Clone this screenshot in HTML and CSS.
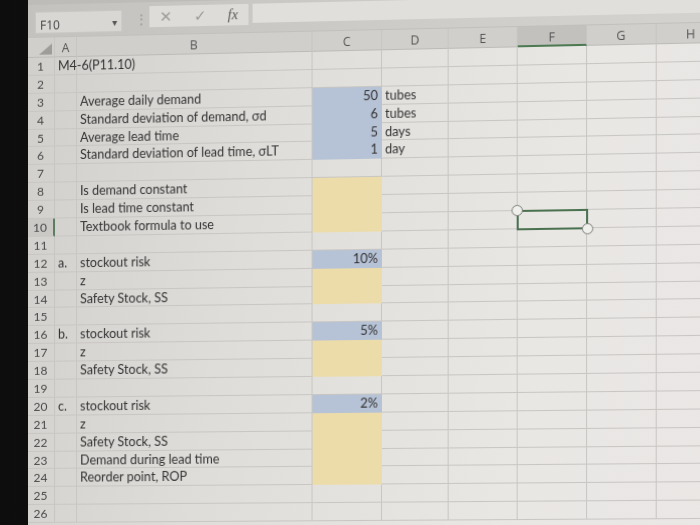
FILE: index.html
```html
<!DOCTYPE html>
<html lang="en">
<head>
    <meta charset="UTF-8">
    <meta name="viewport" content="width=device-width, initial-scale=1.0">
    <title>M4-6 Safety Stock</title>
    <link rel="stylesheet" href="styles.css">
</head>
<body>
    <div class="screen">

        <!-- Formula bar -->
        <div class="ribbon-edge"></div>
        <div class="formula-bar">
            <div class="name-box">F10 <span class="caret">&#9662;</span></div>
            <div class="grip">&#8942;</div>
            <div class="fx-buttons">
                <span class="fx-cancel">&#10005;</span>
                <span class="fx-ok">&#10003;</span>
                <span class="fx-label"><i>fx</i></span>
            </div>
            <div class="fx-input"></div>
        </div>

        <!-- Sheet -->
        <div class="sheet">
            <div class="row head">
                <div class="corner"></div><div>A</div><div>B</div><div>C</div><div>D</div><div>E</div><div class="active">F</div><div>G</div><div>H</div><div></div>
            </div>
            <div class="row">
                <div class="rn">1</div><div class="spill">M4-6(P11.10)</div><div></div><div></div><div></div><div></div><div></div><div></div><div></div><div></div>
            </div>
            <div class="row">
                <div class="rn">2</div><div></div><div></div><div></div><div></div><div></div><div></div><div></div><div></div><div></div>
            </div>
            <div class="row">
                <div class="rn">3</div><div></div><div>Average daily demand</div><div class="blue num">50</div><div>tubes</div><div></div><div></div><div></div><div></div><div></div>
            </div>
            <div class="row">
                <div class="rn">4</div><div></div><div>Standard deviation of demand, σd</div><div class="blue num">6</div><div>tubes</div><div></div><div></div><div></div><div></div><div></div>
            </div>
            <div class="row">
                <div class="rn">5</div><div></div><div>Average lead time</div><div class="blue num">5</div><div>days</div><div></div><div></div><div></div><div></div><div></div>
            </div>
            <div class="row">
                <div class="rn">6</div><div></div><div>Standard deviation of lead time, σLT</div><div class="blue num">1</div><div>day</div><div></div><div></div><div></div><div></div><div></div>
            </div>
            <div class="row">
                <div class="rn">7</div><div></div><div></div><div></div><div></div><div></div><div></div><div></div><div></div><div></div>
            </div>
            <div class="row">
                <div class="rn">8</div><div></div><div>Is demand constant</div><div class="yellow"></div><div></div><div></div><div></div><div></div><div></div><div></div>
            </div>
            <div class="row">
                <div class="rn">9</div><div></div><div>Is lead time constant</div><div class="yellow"></div><div></div><div></div><div></div><div></div><div></div><div></div>
            </div>
            <div class="row">
                <div class="rn active">10</div><div></div><div>Textbook formula to use</div><div class="yellow"></div><div></div><div></div><div class="selected"><span class="handle tl"></span><span class="handle br"></span></div><div></div><div></div><div></div>
            </div>
            <div class="row">
                <div class="rn">11</div><div></div><div></div><div></div><div></div><div></div><div></div><div></div><div></div><div></div>
            </div>
            <div class="row">
                <div class="rn">12</div><div>a.</div><div>stockout risk</div><div class="blue num">10%</div><div></div><div></div><div></div><div></div><div></div><div></div>
            </div>
            <div class="row">
                <div class="rn">13</div><div></div><div>z</div><div class="yellow"></div><div></div><div></div><div></div><div></div><div></div><div></div>
            </div>
            <div class="row">
                <div class="rn">14</div><div></div><div>Safety Stock, SS</div><div class="yellow"></div><div></div><div></div><div></div><div></div><div></div><div></div>
            </div>
            <div class="row">
                <div class="rn">15</div><div></div><div></div><div></div><div></div><div></div><div></div><div></div><div></div><div></div>
            </div>
            <div class="row">
                <div class="rn">16</div><div>b.</div><div>stockout risk</div><div class="blue num">5%</div><div></div><div></div><div></div><div></div><div></div><div></div>
            </div>
            <div class="row">
                <div class="rn">17</div><div></div><div>z</div><div class="yellow"></div><div></div><div></div><div></div><div></div><div></div><div></div>
            </div>
            <div class="row">
                <div class="rn">18</div><div></div><div>Safety Stock, SS</div><div class="yellow"></div><div></div><div></div><div></div><div></div><div></div><div></div>
            </div>
            <div class="row">
                <div class="rn">19</div><div></div><div></div><div></div><div></div><div></div><div></div><div></div><div></div><div></div>
            </div>
            <div class="row">
                <div class="rn">20</div><div>c.</div><div>stockout risk</div><div class="blue num">2%</div><div></div><div></div><div></div><div></div><div></div><div></div>
            </div>
            <div class="row">
                <div class="rn">21</div><div></div><div>z</div><div class="yellow"></div><div></div><div></div><div></div><div></div><div></div><div></div>
            </div>
            <div class="row">
                <div class="rn">22</div><div></div><div>Safety Stock, SS</div><div class="yellow"></div><div></div><div></div><div></div><div></div><div></div><div></div>
            </div>
            <div class="row">
                <div class="rn">23</div><div></div><div>Demand during lead time</div><div class="yellow"></div><div></div><div></div><div></div><div></div><div></div><div></div>
            </div>
            <div class="row">
                <div class="rn">24</div><div></div><div>Reorder point, ROP</div><div class="yellow"></div><div></div><div></div><div></div><div></div><div></div><div></div>
            </div>
            <div class="row">
                <div class="rn">25</div><div></div><div></div><div></div><div></div><div></div><div></div><div></div><div></div><div></div>
            </div>
            <div class="row">
                <div class="rn">26</div><div></div><div></div><div></div><div></div><div></div><div></div><div></div><div></div><div></div>
            </div>
        </div>
    </div>
</body>
</html>
```

FILE: styles.css
```css
* {
    box-sizing: border-box;
}

body {
    margin: 0;
    padding-left: 28px;
    height: 525px;
    overflow: hidden;
    background: linear-gradient(to right, #0d0d0d, #1b1b1b);
    font-family: 'Lato', 'Liberation Sans', sans-serif;
}

/* the photo is taken at a slight angle: right side is closer */
.screen {
    width: 760px;
    height: 540px;
    background: linear-gradient(100deg, #d1cfcc 0%, #dfddda 30%, #e9e7e4 65%, #eae7e6 100%);
    transform: perspective(1000px) rotateY(-1.94deg);
    transform-origin: 0 700px;
}

.ribbon-edge {
    height: 5px;
    background: #bebcb9;
}

.formula-bar {
    height: 33px;
    display: flex;
    align-items: flex-start;
    background: linear-gradient(to right, #c4c2bf, #d0cecb 60%, #d6d4d1);
    border-bottom: 1px solid #c2c0bd;
}

.name-box {
    margin: 7px 0 0 7px;
    width: 87px;
    height: 22px;
    background: #d9d7d4;
    border: 1px solid #cac8c5;
    font-family: 'Open Sans', sans-serif;
    font-size: 12px;
    color: #444;
    padding: 4px 0 0 4px;
    display: flex;
    justify-content: space-between;
}

.name-box .caret {
    font-size: 10px;
    color: #555;
    padding-right: 4px;
}

.grip {
    margin: 8px 0 0 12px;
    width: 10px;
    color: #9a9895;
    font-size: 14px;
}

.fx-buttons {
    margin: 4px 0 0 5px;
    width: 98px;
    height: 21px;
    background: #dedcd9;
    display: flex;
    align-items: center;
    justify-content: space-around;
    color: #9d9b98;
    font-size: 15px;
}

.fx-label {
    font-family: 'Liberation Serif', serif;
    color: #5a5855;
    font-size: 14px;
}

.fx-input {
    margin: 4px 0 0 4px;
    flex: 1;
    height: 19px;
    background: #e1dfdc;
}

.sheet {
    --cols: 27px 22px 233px 68px 65px 67px 66.5px 67px 67px 80px;
}

.row {
    display: grid;
    grid-template-columns: var(--cols);
    height: 17.9px;
    font-size: 12.5px;
    color: #333;
}

.row > div {
    border-right: 1px solid #c8c6c3;
    border-bottom: 1px solid #c8c6c3;
    padding: 0 3px;
    line-height: 17px;
    white-space: nowrap;
    overflow: hidden;
}

.row > .spill {
    overflow: visible;
}

.row.head {
    height: 20px;
    background: #d1cfcc;
    font-family: 'Open Sans', sans-serif;
    font-size: 12px;
    color: #555;
}

.row.head > div {
    text-align: center;
    line-height: 22px;
    border-bottom-color: #bdbbb8;
}

.row.head > .active {
    background: #c3c1be;
    border-bottom: 2px solid #4d7a52;
}

.corner {
    position: relative;
}

.corner::after {
    content: "";
    position: absolute;
    right: 2px;
    bottom: 2px;
    border-left: 13px solid transparent;
    border-bottom: 11px solid #9f9d9a;
}

.row > .rn {
    padding: 0 1px 0 0;
    text-align: center;
    color: #4a4a4a;
    font-size: 12px;
}

.row > .rn.active {
    background: #cbc9c6;
    border-right: 2px solid #5d7d60;
}

.row > .blue {
    background: #b6c2d5;
    border-color: transparent;
}

.row > .yellow {
    background: #ecdcaa;
    border-color: transparent;
}

.num {
    text-align: right;
}

.row > .selected {
    position: relative;
    overflow: visible;
}

.selected::before {
    content: "";
    position: absolute;
    left: -1px;
    top: -1px;
    right: -2px;
    bottom: -2px;
    border: 2px solid #4b7250;
}

.handle {
    position: absolute;
    width: 11px;
    height: 11px;
    border-radius: 50%;
    background: #efefec;
    border: 1px solid #7e7e7b;
}

.handle.tl {
    left: -6px;
    top: -6px;
}

.handle.br {
    right: -7px;
    bottom: -7px;
}
```
